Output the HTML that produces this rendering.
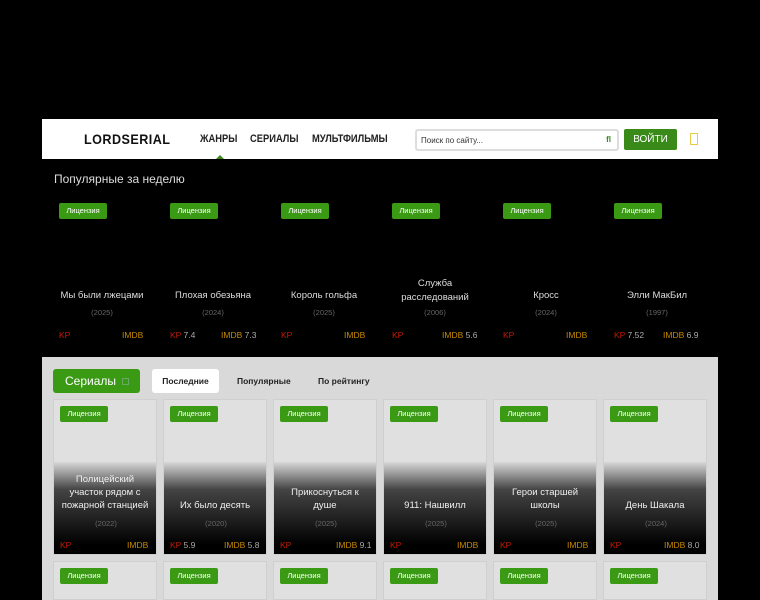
<!DOCTYPE html>
<html style="width:760px;height:600px;overflow:hidden"><head><meta charset="utf-8"><style>
*{margin:0;padding:0;box-sizing:border-box}
body{width:760px;height:600px;background:#000;font-family:"Liberation Sans",sans-serif;position:relative;overflow:hidden}
.hdr{position:absolute;left:42px;top:119px;width:676px;height:40px;background:#fff}
.logo{position:absolute;left:42px;top:12px;font-weight:bold;font-size:14px;letter-spacing:0.5px;color:#111;transform:scaleX(0.9);transform-origin:left}
.nav{position:absolute;top:14px;font-size:11px;font-weight:bold;color:#222;transform:scaleX(0.85);transform-origin:left}
.search{position:absolute;left:373px;top:10px;width:204px;height:22px;border:2px solid #ddd;border-radius:3px;font-size:8px;color:#333;padding:5px 0 0 4px}
.login{position:absolute;left:582px;top:10px;width:53px;height:21px;background:#3a8a1a;border-radius:2px;color:#fff;font-size:10px;text-align:center;line-height:21px}
.bm{position:absolute;left:648px;top:14px;width:8px;height:12px;border:1px solid #e8c94a}
.pop{position:absolute;left:54px;top:172px;color:#ddd;font-size:12px}
.badge{position:absolute;width:48px;height:16px;background:#3a9a14;color:#fff;font-size:7.5px;text-align:center;line-height:16px;border-radius:2px}
.tc{position:absolute;width:100px;text-align:center;color:#ddd;font-size:9.5px}
.yr{position:absolute;width:100px;text-align:center;color:#666;font-size:7.5px}
.kp{position:absolute;color:#c41a00;font-size:8.5px}
.im{position:absolute;color:#c88a00;font-size:8.5px}
.kp span,.im span{color:#aaa}
.gray{position:absolute;left:42px;top:357px;width:676px;height:243px;background:#d9d9d9}
.card{position:absolute;width:104px;height:156px;background:#e0e0e0;border:1px solid #cfcfcf;overflow:hidden}
.card .g{position:absolute;left:0;right:0;top:62px;bottom:0;background:linear-gradient(#d8d8d8,#444 30%,#000 90%)}
.card .t{position:absolute;left:4px;right:4px;color:#eee;font-size:9.5px;text-align:center;line-height:13px}
</style></head><body>
<div class="hdr">
<div class="logo">LORDSERIAL</div>
<div class="nav" style="left:158px">ЖАНРЫ</div>
<div style="position:absolute;left:174px;top:36px;width:0;height:0;border-left:4px solid transparent;border-right:4px solid transparent;border-bottom:4px solid #3a8a1a"></div>
<div class="nav" style="left:208px">СЕРИАЛЫ</div>
<div class="nav" style="left:270px">МУЛЬТФИЛЬМЫ</div>
<div class="search">Поиск по сайту...<span style="position:absolute;right:6px;top:4px;color:#3a8a1a;font-weight:bold">ﬂ</span></div>
<div class="login">ВОЙТИ</div>
<div class="bm"></div>
</div>
<div class="pop">Популярные за неделю</div>

<div class="badge" style="left:59px;top:203px">Лицензия</div>
<div class="badge" style="left:170px;top:203px">Лицензия</div>
<div class="badge" style="left:281px;top:203px">Лицензия</div>
<div class="badge" style="left:392px;top:203px">Лицензия</div>
<div class="badge" style="left:503px;top:203px">Лицензия</div>
<div class="badge" style="left:614px;top:203px">Лицензия</div>

<div class="tc" style="left:52px;top:290px">Мы были лжецами</div>
<div class="tc" style="left:163px;top:290px">Плохая обезьяна</div>
<div class="tc" style="left:274px;top:290px">Король гольфа</div>
<div class="tc" style="left:385px;top:277px;line-height:14px">Служба расследований</div>
<div class="tc" style="left:496px;top:290px">Кросс</div>
<div class="tc" style="left:607px;top:290px">Элли МакБил</div>
<div class="yr" style="left:52px;top:308px">(2025)</div>
<div class="yr" style="left:163px;top:308px">(2024)</div>
<div class="yr" style="left:274px;top:308px">(2025)</div>
<div class="yr" style="left:385px;top:308px">(2006)</div>
<div class="yr" style="left:496px;top:308px">(2024)</div>
<div class="yr" style="left:607px;top:308px">(1997)</div>
<div class="kp" style="left:59px;top:330px">KP</div><div class="im" style="left:122px;top:330px">IMDB</div>
<div class="kp" style="left:170px;top:330px">KP <span>7.4</span></div><div class="im" style="left:221px;top:330px">IMDB <span>7.3</span></div>
<div class="kp" style="left:281px;top:330px">KP</div><div class="im" style="left:344px;top:330px">IMDB</div>
<div class="kp" style="left:392px;top:330px">KP</div><div class="im" style="left:442px;top:330px">IMDB <span>5.6</span></div>
<div class="kp" style="left:503px;top:330px">KP</div><div class="im" style="left:566px;top:330px">IMDB</div>
<div class="kp" style="left:614px;top:330px">KP <span>7.52</span></div><div class="im" style="left:663px;top:330px">IMDB <span>6.9</span></div>

<div class="gray">
<div style="position:absolute;left:11px;top:12px;width:87px;height:24px;background:#3a9a14;border-radius:3px;color:#fff;font-size:12px;line-height:24px;padding-left:12px">Сериалы <span style="display:inline-block;width:7px;height:7px;border:1px solid #6a6;margin-left:3px"></span></div>
<div style="position:absolute;left:110px;top:12px;width:67px;height:24px;background:#fff;border-radius:3px;font-size:8.5px;font-weight:bold;color:#222;text-align:center;line-height:24px">Последние</div>
<div style="position:absolute;left:195px;top:12px;font-size:8.5px;font-weight:bold;color:#222;line-height:24px">Популярные</div>
<div style="position:absolute;left:276px;top:12px;font-size:8.5px;font-weight:bold;color:#222;line-height:24px">По рейтингу</div>
</div>

<div class="card" style="left:53px;top:399px"><div class="g"></div><div class="badge" style="left:6px;top:6px">Лицензия</div><div class="t" style="top:73px">Полицейский участок рядом с пожарной станцией</div><div class="yr" style="left:2px;top:119px">(2022)</div><div class="kp" style="left:6px;top:140px">KP</div><div class="im" style="left:73px;top:140px">IMDB</div></div>
<div class="card" style="left:163px;top:399px"><div class="g"></div><div class="badge" style="left:6px;top:6px">Лицензия</div><div class="t" style="top:99px">Их было десять</div><div class="yr" style="left:2px;top:119px">(2020)</div><div class="kp" style="left:6px;top:140px">KP <span>5.9</span></div><div class="im" style="left:60px;top:140px">IMDB <span>5.8</span></div></div>
<div class="card" style="left:273px;top:399px"><div class="g"></div><div class="badge" style="left:6px;top:6px">Лицензия</div><div class="t" style="top:86px;left:12px;right:12px">Прикоснуться к душе</div><div class="yr" style="left:2px;top:119px">(2025)</div><div class="kp" style="left:6px;top:140px">KP</div><div class="im" style="left:62px;top:140px">IMDB <span>9.1</span></div></div>
<div class="card" style="left:383px;top:399px"><div class="g"></div><div class="badge" style="left:6px;top:6px">Лицензия</div><div class="t" style="top:99px">911: Нашвилл</div><div class="yr" style="left:2px;top:119px">(2025)</div><div class="kp" style="left:6px;top:140px">KP</div><div class="im" style="left:73px;top:140px">IMDB</div></div>
<div class="card" style="left:493px;top:399px"><div class="g"></div><div class="badge" style="left:6px;top:6px">Лицензия</div><div class="t" style="top:86px">Герои старшей школы</div><div class="yr" style="left:2px;top:119px">(2025)</div><div class="kp" style="left:6px;top:140px">KP</div><div class="im" style="left:73px;top:140px">IMDB</div></div>
<div class="card" style="left:603px;top:399px"><div class="g"></div><div class="badge" style="left:6px;top:6px">Лицензия</div><div class="t" style="top:99px">День Шакала</div><div class="yr" style="left:2px;top:119px">(2024)</div><div class="kp" style="left:6px;top:140px">KP</div><div class="im" style="left:60px;top:140px">IMDB <span>8.0</span></div></div>

<div class="card" style="left:53px;top:561px;height:39px"><div class="badge" style="left:6px;top:6px">Лицензия</div></div>
<div class="card" style="left:163px;top:561px;height:39px"><div class="badge" style="left:6px;top:6px">Лицензия</div></div>
<div class="card" style="left:273px;top:561px;height:39px"><div class="badge" style="left:6px;top:6px">Лицензия</div></div>
<div class="card" style="left:383px;top:561px;height:39px"><div class="badge" style="left:6px;top:6px">Лицензия</div></div>
<div class="card" style="left:493px;top:561px;height:39px"><div class="badge" style="left:6px;top:6px">Лицензия</div></div>
<div class="card" style="left:603px;top:561px;height:39px"><div class="badge" style="left:6px;top:6px">Лицензия</div></div>
</body></html>
